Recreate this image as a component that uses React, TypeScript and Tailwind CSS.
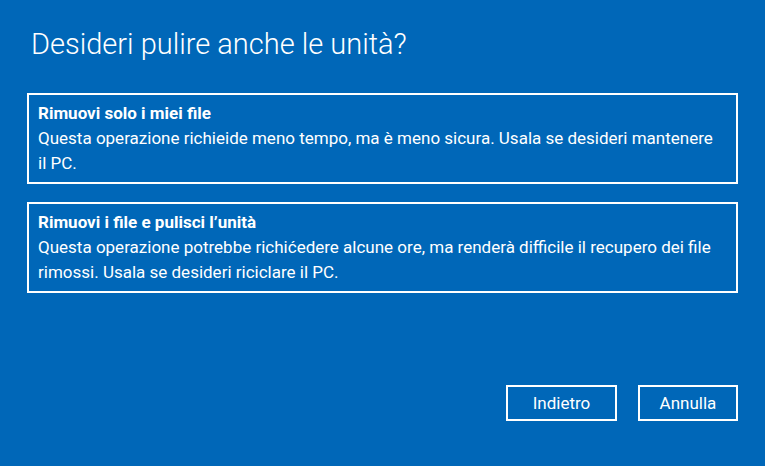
export default function App() {
  const font = { fontFamily: '"Segoe UI", Roboto, "Noto Sans", sans-serif' };
  return (
    <div className="w-[765px] h-[466px] bg-[#0067b8] text-white flex flex-col overflow-hidden" style={font}>
      <h1 className="ml-[31px] mt-[24px] text-[29px] leading-[40px] font-light">
        Desideri pulire anche le unità?
      </h1>
      <div className="mx-[27px] mt-[29px] flex flex-col gap-[18px]">
        <div className="border-2 border-white px-[9px] pt-[6px] pb-[6px] text-[17px] leading-[25px]">
          <div className="font-bold">Rimuovi solo i miei file</div>
          <div>
            Questa operazione richieide meno tempo, ma è meno sicura. Usala se desideri mantenere
            <br />
            il PC.
          </div>
        </div>
        <div className="border-2 border-white px-[9px] pt-[6px] pb-[6px] text-[17px] leading-[25px]">
          <div className="font-bold">Rimuovi i file e pulisci l’unità</div>
          <div>
            Questa operazione potrebbe richićedere alcune ore, ma renderà difficile il recupero dei file
            <br />
            rimossi. Usala se desideri riciclare il PC.
          </div>
        </div>
      </div>
      <div className="mt-auto mb-[45px] mr-[27px] flex justify-end gap-[21px]">
        <button className="w-[111px] h-[36px] border-2 border-white text-[17px] leading-none">Indietro</button>
        <button className="w-[100px] h-[36px] border-2 border-white text-[17px] leading-none">Annulla</button>
      </div>
    </div>
  );
}
